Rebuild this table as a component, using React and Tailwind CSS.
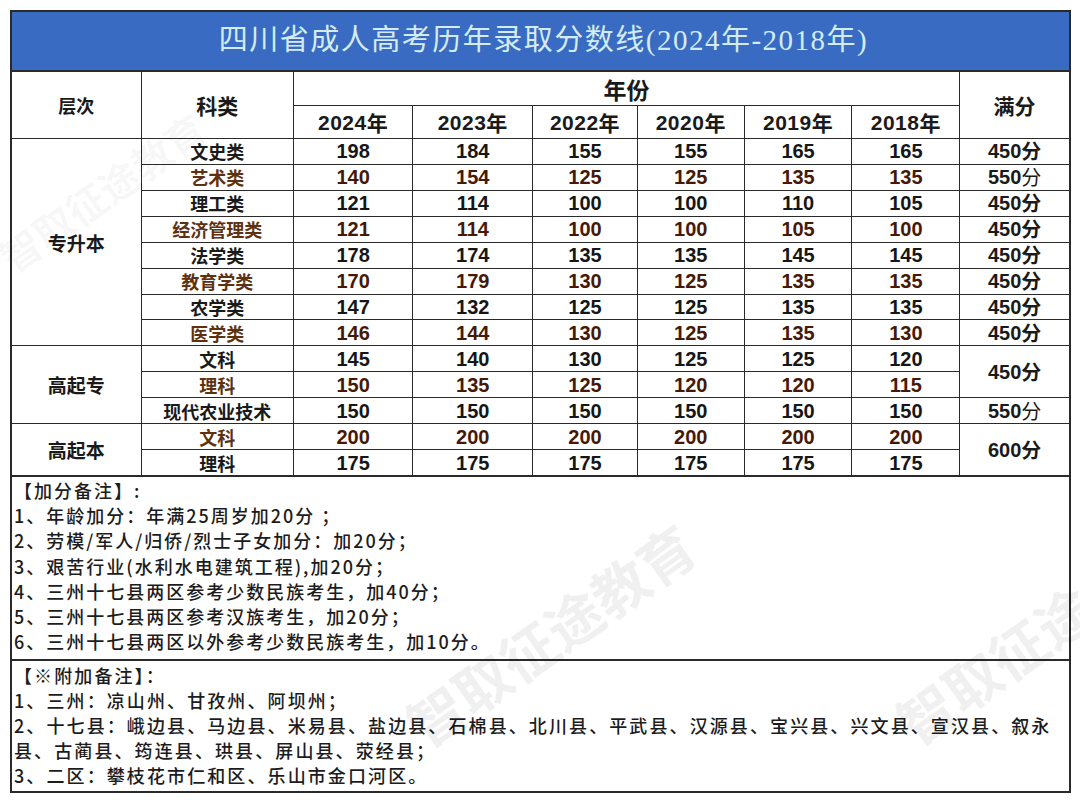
import React from "react";
import clsx from "clsx";

const years = ["2024年", "2023年", "2022年", "2020年", "2019年", "2018年"];

// [科类, 分数, 满分, 橙色行, 满分"分"是否细体]
const zsb = [
  ["文史类", ["198", "184", "155", "155", "165", "165"], "450", false],
  ["艺术类", ["140", "154", "125", "125", "135", "135"], "550", true, true],
  ["理工类", ["121", "114", "100", "100", "110", "105"], "450", false],
  ["经济管理类", ["121", "114", "100", "100", "105", "100"], "450", true],
  ["法学类", ["178", "174", "135", "135", "145", "145"], "450", false],
  ["教育学类", ["170", "179", "130", "125", "135", "135"], "450", true],
  ["农学类", ["147", "132", "125", "125", "135", "135"], "450", false],
  ["医学类", ["146", "144", "130", "125", "135", "130"], "450", true],
];

const notes1 = [
  "【加分备注】:",
  "1、年龄加分：年满25周岁加20分 ；",
  "2、劳模/军人/归侨/烈士子女加分：加20分；",
  "3、艰苦行业(水利水电建筑工程),加20分；",
  "4、三州十七县两区参考少数民族考生，加40分；",
  "5、三州十七县两区参考汉族考生，加20分；",
  "6、三州十七县两区以外参考少数民族考生，加10分。",
];

const notes2 = [
  "【※附加备注】：",
  "1、三州：凉山州、甘孜州、阿坝州；",
  "2、十七县：峨边县、马边县、米易县、盐边县、石棉县、北川县、平武县、汉源县、宝兴县、兴文县、宣汉县、叙永",
  "县、古蔺县、筠连县、珙县、屏山县、荥经县；",
  "3、二区：攀枝花市仁和区、乐山市金口河区。",
];

const cjk = "font-['Noto_Sans_CJK_SC',sans-serif]";
const num = "font-['Liberation_Sans','Noto_Sans_CJK_SC',sans-serif] font-bold text-[20px]";

const Cell = ({ className, children }) => (
  <div className={clsx("flex items-center justify-center bg-white leading-none", className)}>
    {children}
  </div>
);

const Row = ({ name, scores, orange }) => (
  <>
    <Cell
      className={clsx(
        cjk,
        "font-bold text-[18px]",
        orange ? "bg-[#f6bb24] text-[#5e3210]" : "text-[#1a1a1a]"
      )}
    >
      {name}
    </Cell>
    {scores.map((s, i) => (
      <Cell
        key={i}
        className={clsx(num, orange ? "bg-[#f6bb24] text-[#461906]" : "text-[#161616]")}
      >
        {s}
      </Cell>
    ))}
  </>
);

const Full = ({ value, thin, className }) => (
  <Cell className={clsx(num, "text-[#1a1a1a]", className)}>
    {value}
    <span className={clsx(cjk, thin ? "font-normal" : "font-bold")}>分</span>
  </Cell>
);

const Group = ({ children, className }) => (
  <Cell className={clsx(cjk, "font-bold text-[19px] text-[#1a1a1a]", className)}>{children}</Cell>
);

export default function App() {
  return (
    <div className="w-[1080px] h-[800px] bg-white pl-[10px] pt-[10px]">
      <div className="relative w-[1061px] border-2 border-[#2a2a2a]">
        {/* title */}
        <div className="h-[60px] bg-[#3a6bc2] flex items-center justify-center border-b-2 border-[#2a2a2a]">
          <span className="font-['Liberation_Serif','Noto_Sans_CJK_SC',serif] text-[29px] tracking-[1.5px] text-[#d3ecf1] ml-[6px]">
            四川省成人高考历年录取分数线(2024年-2018年)
          </span>
        </div>

        {/* table */}
        <div className="grid h-[403px] gap-px bg-[#2a2a2a] grid-cols-[130fr_153fr_120fr_120fr_105fr_107fr_108fr_108fr_110fr] grid-rows-[33px_32px_repeat(13,minmax(0,1fr))]">
          <Cell className={clsx(cjk, "row-span-2 font-bold text-[18px] text-[#1a1a1a]")}>层次</Cell>
          <Cell className={clsx(cjk, "row-span-2 font-bold text-[21px] text-[#1a1a1a]")}>科类</Cell>
          <Cell className={clsx(cjk, "col-span-6 font-bold text-[23px] text-[#1a1a1a] pt-[2px]")}>年份</Cell>
          <Cell className={clsx(cjk, "row-span-2 font-bold text-[21px] text-[#1a1a1a]")}>满分</Cell>
          {years.map((y) => (
            <Cell key={y} className={clsx(num, "text-[21px] tracking-[0.5px] text-[#1a1a1a]")}>
              {y.slice(0, 4)}
              <span className={cjk}>年</span>
            </Cell>
          ))}

          <Group className="row-span-8">专升本</Group>
          {zsb.map(([name, scores, full, orange, thin]) => (
            <React.Fragment key={name}>
              <Row name={name} scores={scores} orange={orange} />
              <Full value={full} thin={thin} />
            </React.Fragment>
          ))}

          <Group className="row-span-3">高起专</Group>
          <Row name="文科" scores={["145", "140", "130", "125", "125", "120"]} />
          <Full value="450" className="row-span-2" />
          <Row name="理科" scores={["150", "135", "125", "120", "120", "115"]} orange />
          <Row name="现代农业技术" scores={["150", "150", "150", "150", "150", "150"]} />
          <Full value="550" thin />

          <Group className="row-span-2">高起本</Group>
          <Row name="文科" scores={["200", "200", "200", "200", "200", "200"]} orange />
          <Full value="600" className="row-span-2" />
          <Row name="理科" scores={["175", "175", "175", "175", "175", "175"]} />
        </div>

        {/* notes */}
        <div className="h-[184px] border-t-2 border-[#2a2a2a] pl-[2px] pt-px">
          {notes1.map((t) => (
            <div
              key={t}
              className={clsx(cjk, "whitespace-nowrap font-medium text-[18px] leading-[25.2px] tracking-[2px] text-[#1c1c1c]")}
            >
              {t}
            </div>
          ))}
        </div>
        <div className="h-[132px] border-t-2 border-[#2a2a2a] pl-[2px] pt-[2px]">
          {notes2.map((t) => (
            <div
              key={t}
              className={clsx(cjk, "whitespace-nowrap font-medium text-[18px] leading-[25px] tracking-[2.1px] text-[#1c1c1c]")}
            >
              {t}
            </div>
          ))}
        </div>

        {/* watermarks */}
        <div className="pointer-events-none absolute left-[-30px] top-[150px] -rotate-[35deg] text-[40px] font-bold text-black/[0.04] whitespace-nowrap font-['Noto_Sans_CJK_SC',sans-serif]">
          智取征途教育
        </div>
        <div className="pointer-events-none absolute left-[370px] top-[580px] -rotate-[35deg] text-[56px] font-bold text-black/[0.06] whitespace-nowrap font-['Noto_Sans_CJK_SC',sans-serif]">
          智取征途教育
        </div>
        <div className="pointer-events-none absolute left-[870px] top-[610px] -rotate-[35deg] text-[56px] font-bold text-black/[0.06] whitespace-nowrap font-['Noto_Sans_CJK_SC',sans-serif]">
          智取征途
        </div>
      </div>
    </div>
  );
}
